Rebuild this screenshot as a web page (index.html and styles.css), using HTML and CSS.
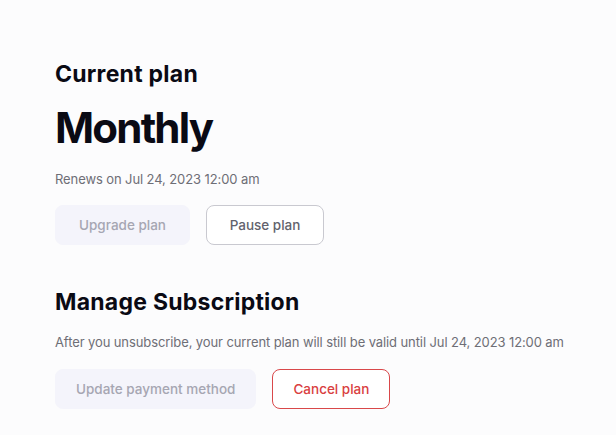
FILE: index.html
```html
<!DOCTYPE html>
<html lang="en">
<head>
    <meta charset="UTF-8">
    <meta name="viewport" content="width=device-width, initial-scale=1.0">
    <title>Subscription</title>
    <link rel="stylesheet" href="styles.css">
</head>
<body>
    <div class="page">
        <section class="plan">
            <h2 class="section-title">Current plan</h2>
            <div class="plan-name">Monthly</div>
            <p class="note">Renews on Jul 24, 2023 12:00 am</p>
            <div class="actions">
                <button class="btn btn-soft btn-wide">Upgrade plan</button>
                <button class="btn btn-outline">Pause plan</button>
            </div>
        </section>

        <section class="manage">
            <h2 class="section-title">Manage Subscription</h2>
            <p class="note">After you unsubscribe, your current plan will still be valid until Jul 24, 2023 12:00 am</p>
            <div class="actions">
                <button class="btn btn-soft">Update payment method</button>
                <button class="btn btn-danger">Cancel plan</button>
            </div>
        </section>
    </div>
</body>
</html>
```

FILE: styles.css
```css
body {
    margin: 0;
    background: #fcfcfd;
    font-family: Inter, "Noto Sans", sans-serif;
    color: #0a0a14;
}

.page {
    padding: 60px 20px 0 55px;
}

.section-title {
    margin: 0;
    font-size: 23px;
    font-weight: 700;
    line-height: 28px;
    letter-spacing: 0.25px;
}

.plan-name {
    margin-top: 15px;
    font-size: 42px;
    font-weight: 700;
    line-height: 50px;
    letter-spacing: -1.8px;
}

.note {
    margin: 17px 0 0;
    font-size: 13px;
    line-height: 18px;
    letter-spacing: -0.1px;
    color: #6e6e76;
    white-space: nowrap;
}

.actions {
    display: flex;
    gap: 16px;
    margin-top: 17px;
}

.btn {
    height: 40px;
    min-width: 118px;
    padding: 0 20px;
    border-radius: 8px;
    font-family: inherit;
    font-size: 13.5px;
    font-weight: 500;
    cursor: pointer;
}

.btn-wide {
    min-width: 135px;
}

.btn-soft {
    background: #f4f4fb;
    border: 1px solid #f4f4fb;
    color: #a6a6b2;
}

.btn-outline {
    background: #fff;
    border: 1px solid #c9c9d0;
    color: #62626c;
}

.btn-danger {
    background: #fff;
    border: 1px solid #d9484a;
    color: #d9403f;
}

.manage {
    margin-top: 43px;
}

.manage .note {
    margin-top: 17px;
}

.manage .actions {
    margin-top: 18px;
}
```
